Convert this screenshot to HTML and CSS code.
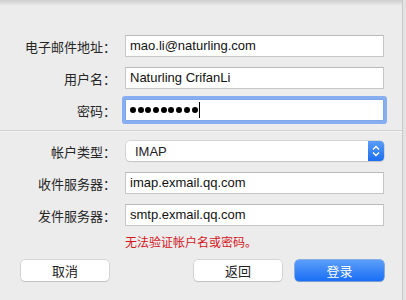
FILE: index.html
```html
<!DOCTYPE html>
<html lang="zh-CN">
<head>
    <meta charset="UTF-8">
    <title>添加帐户</title>
    <link rel="stylesheet" href="styles.css">
</head>
<body>
    <div class="window">
        <div class="fields top">
            <div class="row">
                <label class="label">电子邮件地址：</label>
                <div class="input">mao.li@naturling.com</div>
            </div>
            <div class="row">
                <label class="label">用户名：</label>
                <div class="input">Naturling CrifanLi</div>
            </div>
            <div class="row">
                <label class="label">密码：</label>
                <div class="input focused">
                    <span class="dots">
                        <i></i><i></i><i></i><i></i><i></i><i></i><i></i><i></i><i></i>
                    </span>
                    <span class="caret"></span>
                </div>
            </div>
        </div>

        <div class="separator"></div>

        <div class="fields bottom">
            <div class="row popup-row">
                <label class="label">帐户类型：</label>
                <div class="popup">
                    <span class="popup-value">IMAP</span>
                    <span class="stepper">
                        <svg width="8" height="12" viewBox="0 0 8 12">
                            <path d="M1 4.5 L4 1.5 L7 4.5 M1 7.5 L4 10.5 L7 7.5" fill="none" stroke="#fff" stroke-width="1.4"/>
                        </svg>
                    </span>
                </div>
            </div>
            <div class="row">
                <label class="label">收件服务器：</label>
                <div class="input">imap.exmail.qq.com</div>
            </div>
            <div class="row">
                <label class="label">发件服务器：</label>
                <div class="input">smtp.exmail.qq.com</div>
            </div>
        </div>

        <div class="error">无法验证帐户名或密码。</div>

        <div class="buttons">
            <button class="btn">取消</button>
            <span class="spacer"></span>
            <button class="btn">返回</button>
            <button class="btn primary">登录</button>
        </div>
    </div>
</body>
</html>
```

FILE: styles.css
```css
body {
    margin: 0;
    height: 300px;
    overflow: hidden;
    background: #e3e3e3;
    font-family: "Liberation Sans", "Noto Sans CJK SC", sans-serif;
    color: #222;
}
.window {
    width: 402px;
    height: 300px;
    background: linear-gradient(#cdcdcd, #ececec 6px, #ececec);
    border-right: 1px solid #c9c9c9;
}
.fields {
    display: flex;
    flex-direction: column;
    gap: 10px;
}
.fields.top {
    padding-top: 35px;
}
.row {
    display: flex;
    align-items: center;
    height: 22px;
}
.label {
    width: 125px;
    text-align: right;
    font-size: 13px;
    box-sizing: border-box;
    padding-right: 9px;
    color: #262626;
}
.input {
    width: 259px;
    height: 22px;
    box-sizing: border-box;
    background: #fff;
    border: 1px solid #c6c6c6;
    border-top-color: #b9b9b9;
    padding-left: 4px;
    font-size: 13px;
    line-height: 20px;
    color: #111;
    display: flex;
    align-items: center;
}
.input.focused {
    box-shadow: 0 0 0 3px #86aef0;
    border-color: #7ea6e8;
    border-radius: 1px;
}
.dots {
    display: flex;
    gap: 1.7px;
}
.dots i {
    width: 6px;
    height: 6px;
    border-radius: 50%;
    background: #000;
}
.caret {
    width: 1px;
    height: 16px;
    background: #000;
    margin-left: 1px;
}
.separator {
    margin-top: 9px;
    height: 1px;
    background: #d2d2d2;
    border-bottom: 1px solid #f4f4f4;
}
.fields.bottom {
    padding-top: 9px;
    gap: 10px;
}
.popup-row {
    height: 20px;
    margin-bottom: 1px;
}
.popup {
    margin-left: 1px;
    width: 258px;
    height: 20px;
    box-sizing: border-box;
    background: #fff;
    border-radius: 4px;
    box-shadow: 0 0 0 0.5px #c0c0c0, 0 1px 1px rgba(0, 0, 0, 0.15);
    display: flex;
    align-items: center;
    justify-content: space-between;
    font-size: 13px;
}
.popup-value {
    padding-left: 9px;
}
.stepper {
    width: 16px;
    height: 20px;
    border-radius: 0 4px 4px 0;
    background: linear-gradient(#5a9cf8, #1c6ef3);
    display: flex;
    align-items: center;
    justify-content: center;
}
.error {
    margin-top: 9px;
    padding-left: 125px;
    font-size: 12px;
    line-height: 16px;
    color: #d4161d;
}
.buttons {
    margin-top: 9px;
    display: flex;
    padding: 0 18px 0 21px;
    gap: 13px;
}
.spacer {
    flex: 1;
}
.btn {
    width: 88px;
    height: 21px;
    padding: 0;
    border: none;
    border-radius: 4px;
    background: #fff;
    box-shadow: 0 0 0 0.5px #bdbdbd, 0 1px 1px rgba(0, 0, 0, 0.15);
    font-family: "Liberation Sans", "Noto Sans CJK SC", sans-serif;
    font-size: 13px;
    color: #222;
}
.btn.primary {
    width: 89px;
    background: linear-gradient(#5b9ef9, #1a6ef5);
    box-shadow: 0 0 0 0.5px #2a6fd8, 0 1px 1px rgba(0, 0, 0, 0.15);
    color: #fff;
}
```
